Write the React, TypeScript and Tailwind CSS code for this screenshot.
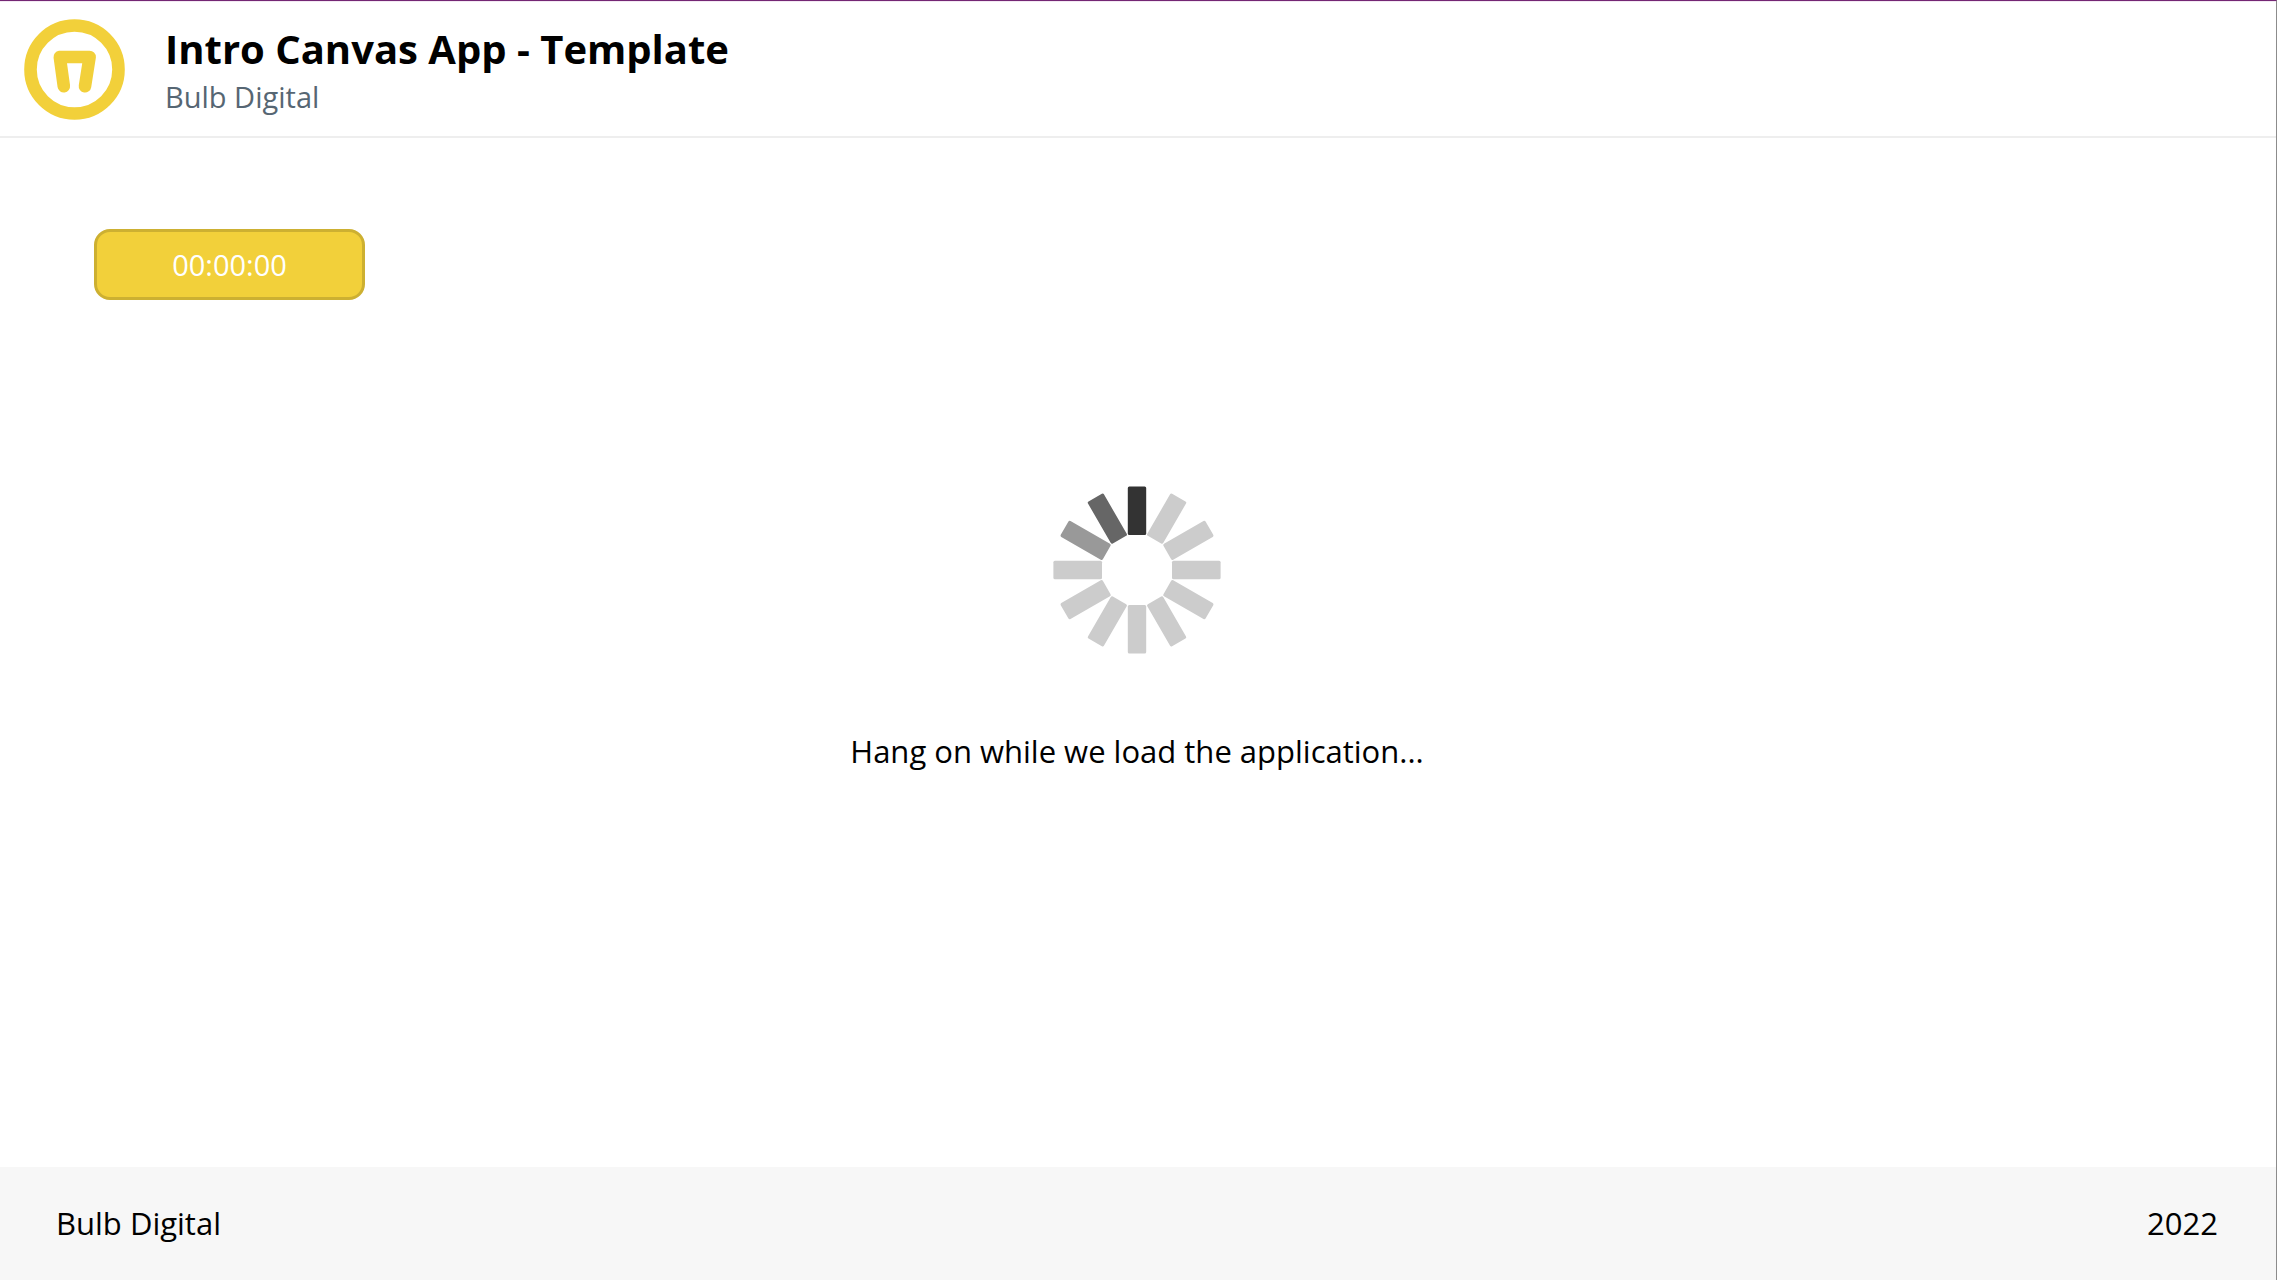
import React from "react";

const spokes = [
  "#333333",
  "#cccccc",
  "#cccccc",
  "#cccccc",
  "#cccccc",
  "#cccccc",
  "#cccccc",
  "#cccccc",
  "#cccccc",
  "#cccccc",
  "#999999",
  "#666666",
];

const Logo = () => (
  <svg className="h-[101px] w-[101px] shrink-0" viewBox="0 0 101 101" fill="none" stroke="#f2d03a">
    <circle cx="50.5" cy="50.5" r="44" strokeWidth="12.6" />
    <path
      d="M39.8 67.2 L35.8 38 H65.6 L61 67.2"
      strokeWidth="12.6"
      strokeLinecap="round"
      strokeLinejoin="round"
    />
  </svg>
);

const Spinner = () => (
  <svg className="h-[168px] w-[168px]" viewBox="-84 -84 168 168" role="status" aria-label="Loading">
    {spokes.map((color, i) => (
      <rect
        key={i}
        x="-9.2"
        y="-83.6"
        width="18.4"
        height="48.6"
        rx="1.5"
        fill={color}
        transform={`rotate(${i * 30})`}
      />
    ))}
  </svg>
);

const Header = () => (
  <header className="flex items-center gap-10 border-b-2 border-[#eeeeee] px-6 pt-[17px] pb-4">
    <Logo />
    <div className="flex flex-col pt-[2px]">
      <h1 className="text-[40px] leading-[52px] font-bold text-black">
        Intro Canvas App - Template
      </h1>
      <p className="text-[29px] leading-[44px] text-[#566673]">Bulb Digital</p>
    </div>
  </header>
);

const Footer = () => (
  <footer className="flex items-center justify-between bg-[#f7f7f7] py-8 pr-[58px] pl-14 text-[31px] leading-[49px] text-black">
    <span>Bulb Digital</span>
    <span>2022</span>
  </footer>
);

const App = () => {
  return (
    <div className="flex min-h-screen flex-col border-t border-r border-t-[#742774] border-r-[#8c8c8c] bg-white font-['Open_Sans',sans-serif]">
      <div className="h-px bg-[#f3e9f3]" />
      <Header />
      <main className="flex flex-1 flex-col pt-[91px] pr-24 pl-[94px]">
        <button
          type="button"
          className="h-[71px] w-[271px] rounded-2xl border-3 border-[#cdb031] bg-[#f2d03a] text-[29px] leading-[40px] text-white"
        >
          00:00:00
        </button>
        <div className="mt-[186px] flex flex-col items-center gap-[73px]">
          <Spinner />
          <p className="text-[31px] leading-[49px] text-black">
            Hang on while we load the application...
          </p>
        </div>
      </main>
      <Footer />
    </div>
  );
};

export default App;
